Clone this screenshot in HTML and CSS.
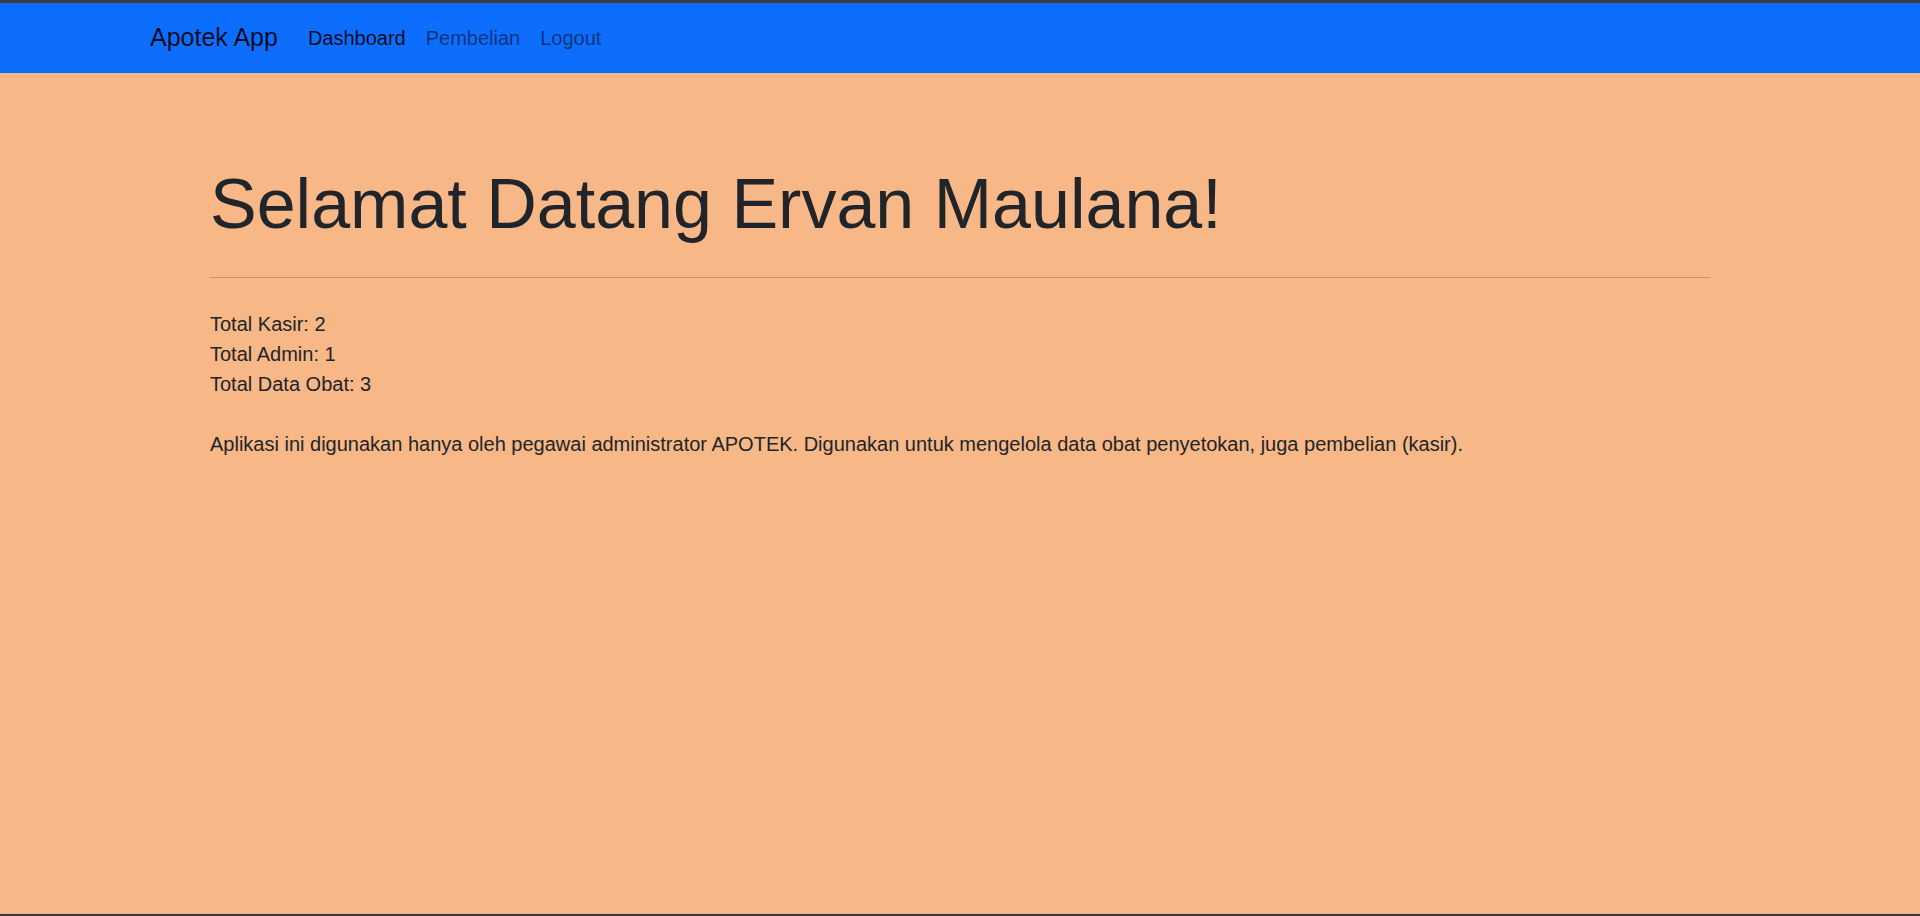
FILE: index.html
```html
<!DOCTYPE html>
<html lang="id">
<head>
<meta charset="utf-8">
<title>Apotek App - Dashboard</title>
<link rel="stylesheet" href="styles.css">
</head>
<body>
<nav class="navbar">
  <div class="nav-container">
    <a class="brand" href="#">Apotek App</a>
    <ul class="nav-links">
      <li><a class="nav-link active" href="#">Dashboard</a></li>
      <li><a class="nav-link" href="#">Pembelian</a></li>
      <li><a class="nav-link" href="#">Logout</a></li>
    </ul>
  </div>
</nav>
<main class="content">
  <h1 class="display">Selamat Datang Ervan Maulana!</h1>
  <hr class="divider">
  <div class="stats">
    <div>Total Kasir: 2</div>
    <div>Total Admin: 1</div>
    <div>Total Data Obat: 3</div>
  </div>
  <p class="desc">Aplikasi ini digunakan hanya oleh pegawai administrator APOTEK. Digunakan untuk mengelola data obat penyetokan, juga pembelian (kasir).</p>
</main>
</body>
</html>
```
FILE: styles.css
```css
* { box-sizing: border-box; }
html, body { margin: 0; padding: 0; }
body {
  font-family: "Liberation Sans", Arial, sans-serif;
  font-size: 20px;
  line-height: 1.5;
  color: #212529;
  background: #f7b787;
  min-height: 100vh;
  border-top: 3px solid #3b3b3b;
  border-bottom: 2px solid #333a44;
}
.navbar {
  background: #0d6efd;
  padding: 10px 0;
}
.nav-container {
  width: 1650px;
  margin: 0 auto;
  padding: 0 15px;
  display: flex;
  align-items: center;
}
.brand {
  font-size: 25px;
  line-height: 1.5;
  padding: 6.25px 0;
  margin-right: 20px;
  color: rgba(0, 0, 0, 0.9);
  text-decoration: none;
}
.nav-links {
  list-style: none;
  margin: 0;
  padding: 0;
  display: flex;
}
.nav-link {
  display: block;
  padding: 10px 10px;
  color: rgba(0, 0, 0, 0.55);
  text-decoration: none;
}
.nav-link.active { color: rgba(0, 0, 0, 0.9); }
.content {
  width: 1500px;
  margin: 0 auto;
  padding-top: 89px;
}
.display {
  font-size: 70px;
  font-weight: 300;
  line-height: 1.2;
  margin: 0 0 10px;
}
.divider {
  margin: 31px 0 31px;
  border: 0;
  border-top: 1px solid #212529;
  opacity: 0.25;
}
.stats { margin: 0; }
.desc { margin: 30px 0 0; }
```
